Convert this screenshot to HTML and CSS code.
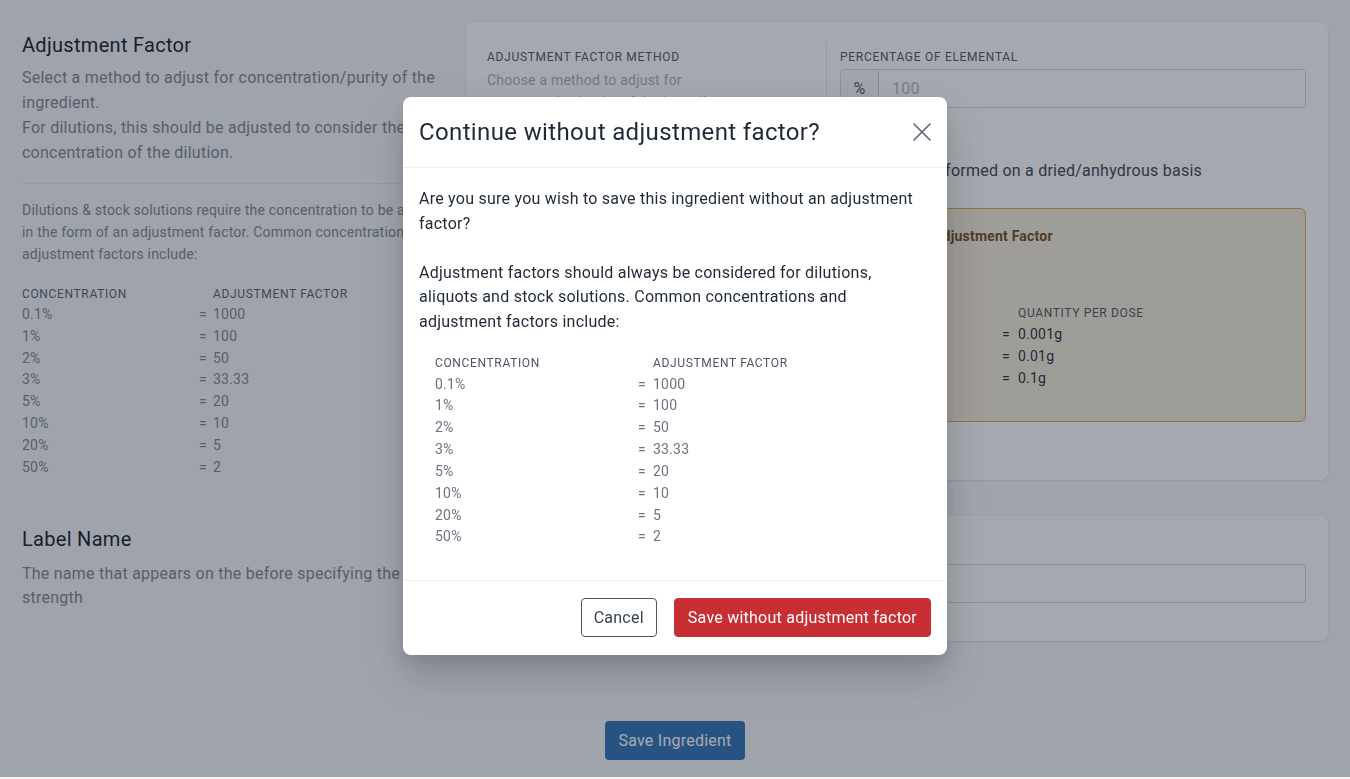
FILE: index.html
```html
<!DOCTYPE html>
<html lang="en">
<head>
<meta charset="utf-8">
<title>Ingredient – Adjustment Factor</title>
<link rel="stylesheet" href="styles.css">
</head>
<body>
<div class="page">
  <div class="form-grid">
    <section class="intro">
      <h2 class="intro-title">Adjustment Factor</h2>
      <p class="lead">Select a method to adjust for concentration/purity of the ingredient.<br>For dilutions, this should be adjusted to consider the concentration of the dilution.</p>
      <hr class="rule">
      <p class="note">Dilutions &amp; stock solutions require the concentration to be applied in the form of an adjustment factor. Common concentrations and adjustment factors include:</p>
      <div class="conc-table">
        <div class="th">Concentration</div><div></div><div class="th">Adjustment Factor</div>
        <div>0.1%</div><div>=</div><div>1000</div>
        <div>1%</div><div>=</div><div>100</div>
        <div>2%</div><div>=</div><div>50</div>
        <div>3%</div><div>=</div><div>33.33</div>
        <div>5%</div><div>=</div><div>20</div>
        <div>10%</div><div>=</div><div>10</div>
        <div>20%</div><div>=</div><div>5</div>
        <div>50%</div><div>=</div><div>2</div>
      </div>
    </section>

    <div class="card card-adjust">
      <div class="field-cols">
        <div class="field-col">
          <div class="label">Adjustment Factor Method</div>
          <p class="help">Choose a method to adjust for concentration/purity of the ingredient</p>
          <div class="select"></div>
        </div>
        <div class="field-col field-col-split">
          <div class="label">Percentage of Elemental</div>
          <div class="input-group"><span class="addon">%</span><span class="input-field placeholder">100</span></div>
          <div class="check"><span class="check-box"></span><span>Assay is performed on a dried/anhydrous basis</span></div>
          <div class="example">
            <div class="example-title">Example of Adjustment Factor</div>
            <div class="dose-table">
              <div></div><div></div><div class="th">Quantity per dose</div>
              <div></div><div>=</div><div>0.001g</div>
              <div></div><div>=</div><div>0.01g</div>
              <div></div><div>=</div><div>0.1g</div>
            </div>
          </div>
        </div>
      </div>
    </div>

    <section class="intro">
      <h2 class="intro-title">Label Name</h2>
      <p class="lead lead-label">The name that appears on the before specifying the strength</p>
    </section>

    <div class="card card-label">
      <div class="label label-spaced">Label Name</div>
      <div class="input-field"></div>
    </div>
  </div>

  <div class="actions">
    <button class="btn btn-primary" type="button">Save Ingredient</button>
  </div>
</div>

<div class="overlay">
  <div class="modal" role="dialog" aria-modal="true">
    <div class="modal-header">
      <h3 class="modal-title">Continue without adjustment factor?</h3>
      <button class="modal-close" type="button" aria-label="Close">
        <svg width="18" height="18" viewBox="0 0 18 18"><path d="M1 1 L17 17 M17 1 L1 17" stroke="currentColor" stroke-width="1.6" fill="none" stroke-linecap="round"/></svg>
      </button>
    </div>
    <div class="modal-body">
      <p class="modal-text">Are you sure you wish to save this ingredient without an adjustment factor?</p>
      <p class="modal-text modal-text-gap">Adjustment factors should always be considered for dilutions, aliquots and stock solutions. Common concentrations and adjustment factors include:</p>
      <div class="modal-table">
        <div class="th">Concentration</div><div></div><div class="th">Adjustment Factor</div>
        <div>0.1%</div><div>=</div><div>1000</div>
        <div>1%</div><div>=</div><div>100</div>
        <div>2%</div><div>=</div><div>50</div>
        <div>3%</div><div>=</div><div>33.33</div>
        <div>5%</div><div>=</div><div>20</div>
        <div>10%</div><div>=</div><div>10</div>
        <div>20%</div><div>=</div><div>5</div>
        <div>50%</div><div>=</div><div>2</div>
      </div>
    </div>
    <div class="modal-footer">
      <button class="btn btn-outline" type="button">Cancel</button>
      <button class="btn btn-danger" type="button">Save without adjustment factor</button>
    </div>
  </div>
</div>
</body>
</html>
```

FILE: styles.css
```css
* { box-sizing: border-box; letter-spacing: 0.015em; }

body {
  margin: 0;
  background: #f6f6f9;
  font-family: Roboto, "Liberation Sans", sans-serif;
  color: #1f2937;
}

.page {
  padding: 22px 22px 0;
}

.form-grid {
  display: grid;
  grid-template-columns: 420px 1fr;
  column-gap: 24px;
  row-gap: 36px;
  align-items: start;
}

.intro {
  padding-top: 9px;
}

.intro-title {
  margin: 0;
  font-size: 20px;
  line-height: 28px;
  font-weight: 400;
  color: #111827;
}

.lead {
  margin: 6px 0 0;
  font-size: 16px;
  line-height: 25px;
  color: #7d838f;
}

.lead-label {
  margin-top: 9px;
  line-height: 24px;
}

.rule {
  margin: 18px 0 0;
  border: 0;
  border-top: 1px solid #e5e7eb;
}

.note {
  margin: 15px -16px 0 0;
  font-size: 14px;
  line-height: 22px;
  color: #7d838f;
}

.th {
  font-size: 12px;
  line-height: 20px;
  letter-spacing: 0.65px;
  text-transform: uppercase;
  color: #4b5563;
}

.conc-table {
  margin-top: 19px;
  display: grid;
  grid-template-columns: 177px 14px 1fr;
  font-size: 14px;
  line-height: 21.8px;
  color: #7d838f;
}

.conc-table .th {
  color: #555d6b;
}

/* cards */
.card {
  background: #fff;
  border-radius: 8px;
  box-shadow: 0 1px 3px rgba(0, 0, 0, 0.08), 0 0 0 1px rgba(0, 0, 0, 0.02);
}

.card-adjust {
  padding: 21px 22px 58px 21px;
}

.field-cols {
  display: grid;
  grid-template-columns: 339px 1fr;
}

.field-col {
  padding-top: 6px;
}

.field-col-split {
  border-left: 1px solid #e5e7eb;
  padding-left: 13px;
}

.label {
  font-size: 12px;
  line-height: 16px;
  letter-spacing: 0.7px;
  text-transform: uppercase;
  color: #4b5563;
  margin-bottom: 4px;
}

.label-spaced {
  margin-bottom: 8px;
}

.help {
  margin: 3px 0 0;
  max-width: 270px;
  font-size: 14px;
  line-height: 22px;
  color: #a7adb8;
}

.select {
  margin-top: 10px;
  margin-right: 14px;
  height: 39px;
  border: 1px solid #d1d5db;
  border-radius: 4px;
}

.input-group {
  display: flex;
  height: 39px;
  border: 1px solid #d1d5db;
  border-radius: 4px;
  overflow: hidden;
}

.addon {
  width: 38px;
  flex: none;
  display: flex;
  align-items: center;
  justify-content: center;
  background: #f7f8fa;
  border-right: 1px solid #d1d5db;
  font-size: 16px;
  color: #4b5563;
}

.input-field {
  flex: 1;
  display: flex;
  align-items: center;
  height: 39px;
  padding: 0 13px;
  font-size: 16px;
  background: #fff;
  color: #374151;
}

.input-group .input-field {
  height: auto;
}

.card-label .input-field {
  border: 1px solid #d1d5db;
  border-radius: 4px;
}

.placeholder {
  color: #b3b8c2;
}

.check {
  margin-top: 51px;
  display: flex;
  align-items: center;
  gap: 0;
  font-size: 16px;
  line-height: 24px;
  color: #374151;
}

.check-box {
  width: 16px;
  height: 16px;
  border: 1px solid #9ca3af;
  border-radius: 3px;
  flex: none;
}

.example {
  margin-top: 25px;
  border: 1px solid #e3a54f;
  border-radius: 6px;
  background: #f6ebd8;
  padding: 17px 16px 32px;
}

.example-title {
  font-size: 14px;
  line-height: 20px;
  font-weight: 700;
  color: #6f4a18;
}

.dose-table {
  margin-top: 57px;
  display: grid;
  grid-template-columns: 145px 16px 1fr;
  font-size: 14px;
  line-height: 22px;
  color: #1f2937;
}

.card-label {
  padding: 24px 22px 38px 21px;
}

/* actions */
.actions {
  display: flex;
  justify-content: center;
  margin-top: 80px;
}

.btn {
  height: 39px;
  border-radius: 4px;
  font-family: inherit;
  font-size: 16px;
  padding: 0 12px;
  border: 1px solid transparent;
  cursor: pointer;
}

.btn-primary {
  background: #2e71b4;
  color: #fff;
}

.btn-outline {
  background: #fff;
  border-color: #4b5563;
  color: #374151;
}

.btn-danger {
  background: #c82f33;
  border-color: #c82f33;
  color: #fff;
  padding: 0 13px;
}

/* modal */
.overlay {
  position: fixed;
  top: 0;
  left: 0;
  right: 0;
  bottom: 2px;
  background: rgba(31, 41, 55, 0.4);
  display: flex;
  justify-content: center;
  align-items: flex-start;
  padding-top: 97px;
}

.modal {
  width: 544px;
  background: #fff;
  border-radius: 8px;
  box-shadow: 0 20px 40px rgba(0, 0, 0, 0.18), 0 8px 12px rgba(0, 0, 0, 0.06);
}

.modal-header {
  display: flex;
  align-items: center;
  justify-content: space-between;
  padding: 17px 16px;
  border-bottom: 1px solid #eeeff1;
}

.modal-title {
  margin: 0;
  font-size: 24px;
  line-height: 36px;
  font-weight: 400;
  color: #1f2937;
}

.modal-close {
  display: flex;
  padding: 0;
  border: 0;
  background: none;
  color: #5b6370;
  cursor: pointer;
}

.modal-body {
  padding: 19px 16px 32px;
}

.modal-text {
  margin: 0;
  font-size: 16px;
  line-height: 24.6px;
  color: #1f2937;
}

.modal-text-gap {
  margin-top: 24.6px;
}

.modal-table {
  margin-top: 18px;
  padding-left: 16px;
  display: grid;
  grid-template-columns: 203px 15px 1fr;
  font-size: 14px;
  line-height: 21.85px;
  color: #6b7280;
}

.modal-table .th {
  padding-bottom: 1px;
}

.modal-footer {
  display: flex;
  justify-content: flex-end;
  gap: 17px;
  padding: 17px 16px 18px;
  border-top: 1px solid #eeeff1;
}
```
